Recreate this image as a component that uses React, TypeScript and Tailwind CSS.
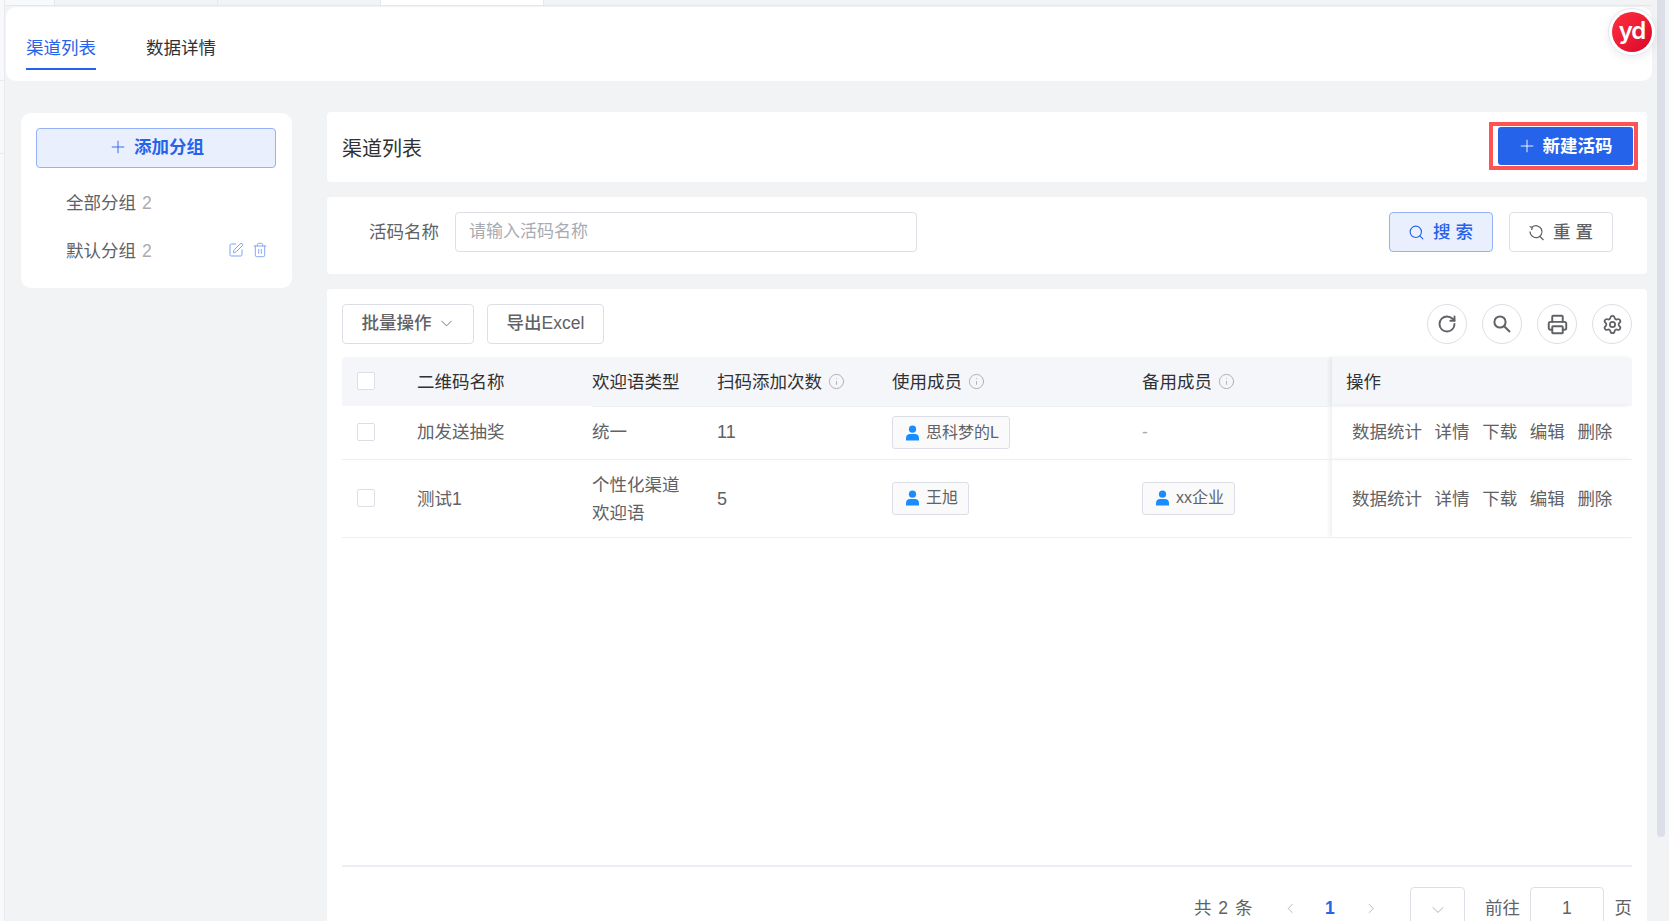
import { ChevronDown, ChevronLeft, ChevronRight, Info, Plus, Printer, RotateCw, Search, Settings, SquarePen, Trash2 } from 'lucide-react';

const OPS = ['数据统计', '详情', '下载', '编辑', '删除'];

function UserIcon() {
  return (
    <svg width="15" height="16" viewBox="0 0 15 16" fill="#1a8cff">
      <circle cx="7.5" cy="4.2" r="3.6" />
      <path d="M1 15.5v-2.6c0-2.4 1.8-4 4-4h5c2.2 0 4 1.6 4 4v2.6z" />
    </svg>
  );
}

function ResetIcon() {
  return (
    <svg width="17" height="17" viewBox="0 0 17 17" fill="none" stroke="#606266" strokeWidth="1.3">
      <path d="M4 3.2A6 6 0 1 1 2 7.6" />
      <path d="M1.5 2.5 L4.2 3.4 L3.6 6" />
      <path d="M11.5 12 L15.5 16" />
    </svg>
  );
}

function MemberTag({ name }: { name: string }) {
  return (
    <span className="inline-flex h-[33px] items-center gap-[6px] rounded-[3px] border border-[#dcdfe6] bg-[#fafafa] pl-[12px] pr-[10px] text-[16px] text-[#606266]">
      <UserIcon />
      {name}
    </span>
  );
}

function HeadCell({ label, tip, line = true }: { label: string; tip?: boolean; line?: boolean }) {
  return (
    <th className={line ? 'border-b border-[#ebeef5] bg-[#f5f6fa] p-0 pt-[1px] text-left text-[17.5px] font-normal text-[#303133]' : 'bg-[#f5f6fa] p-0 pt-[1px] text-left text-[17.5px] font-normal text-[#303133]'}>
      <span className="inline-flex items-center gap-[6px]">
        {label}
        {tip && <Info size={17} strokeWidth={1.3} className="text-[#a8abb2]" />}
      </span>
    </th>
  );
}

function Checkbox() {
  return <span className="ml-[15px] block h-[18px] w-[18px] rounded-[2px] border border-[#dcdfe6] bg-white" />;
}

function OpsCell({ low }: { low?: boolean }) {
  return (
    <td className={low ? 'border-b border-[#ebeef5] p-0 pl-[20px] pt-[2px] shadow-[-3px_0_4px_rgba(0,0,0,0.06)]' : 'border-b border-[#ebeef5] p-0 pl-[20px] shadow-[-3px_0_4px_rgba(0,0,0,0.06)]'}>
      <div className="flex gap-[12.6px] text-[17.5px] text-[#606266]">
        {OPS.map((op) => (
          <span key={op}>{op}</span>
        ))}
      </div>
    </td>
  );
}

function CircleButton({ children }: { children: React.ReactNode }) {
  return (
    <button className="flex h-[40px] w-[40px] items-center justify-center rounded-full border border-[#dcdfe6] bg-white text-[#606266]">
      {children}
    </button>
  );
}

function QrTable() {
  return (
    <table className="w-[1290px] table-fixed border-collapse">
      <colgroup>
        <col className="w-[75px]" />
        <col className="w-[175px]" />
        <col className="w-[125px]" />
        <col className="w-[175px]" />
        <col className="w-[250px]" />
        <col className="w-[190px]" />
        <col className="w-[300px]" />
      </colgroup>
      <thead>
        <tr className="h-[49px]">
          <th className="rounded-tl-[4px] bg-[#f5f6fa] p-0 pb-[2px] text-left">
            <Checkbox />
          </th>
          <HeadCell label="二维码名称" line={false} />
          <HeadCell label="欢迎语类型" />
          <HeadCell label="扫码添加次数" tip />
          <HeadCell label="使用成员" tip />
          <HeadCell label="备用成员" tip />
          <th className="rounded-tr-[4px] bg-[#f5f6fa] p-0 pl-[14px] pt-[1px] text-left text-[17.5px] font-normal text-[#303133] shadow-[-3px_0_4px_rgba(0,0,0,0.06)]">
            操作
          </th>
        </tr>
      </thead>
      <tbody className="text-[17.5px] text-[#606266]">
        <tr className="h-[53px]">
          <td className="border-b border-[#ebeef5] p-0"><Checkbox /></td>
          <td className="border-b border-[#ebeef5] p-0">加发送抽奖</td>
          <td className="border-b border-[#ebeef5] p-0">统一</td>
          <td className="border-b border-[#ebeef5] p-0 text-[18px]">11</td>
          <td className="border-b border-[#ebeef5] p-0"><MemberTag name="思科梦的L" /></td>
          <td className="border-b border-[#ebeef5] p-0 text-[#a8abb2]">-</td>
          <OpsCell />
        </tr>
        <tr className="h-[78px]">
          <td className="border-b border-[#ebeef5] p-0"><Checkbox /></td>
          <td className="border-b border-[#ebeef5] p-0 pt-[2px]">测试1</td>
          <td className="border-b border-[#ebeef5] p-0 pt-[2px] leading-[28px]">个性化渠道<br />欢迎语</td>
          <td className="border-b border-[#ebeef5] p-0 pt-[2px] text-[18px]">5</td>
          <td className="border-b border-[#ebeef5] p-0"><MemberTag name="王旭" /></td>
          <td className="border-b border-[#ebeef5] p-0"><MemberTag name="xx企业" /></td>
          <OpsCell low />
        </tr>
      </tbody>
    </table>
  );
}

function Sidebar() {
  return (
    <aside className="mt-[1px] h-[175px] w-[271px] shrink-0 rounded-[10px] bg-white px-[15px] pt-[15px]">
      <button className="flex h-[40px] w-[240px] items-center justify-center gap-[6px] rounded-[4px] border border-[#94b2f5] bg-[#e9effd] pb-[2px] text-[17.5px] font-bold text-[#2563eb]">
        <Plus size={20} strokeWidth={1.1} />
        添加分组
      </button>
      <div className="mt-[12px] flex h-[47px] items-center pl-[30px] text-[17.5px] text-[#606266]">
        全部分组<span className="ml-[6px] text-[#a8abb2]">2</span>
      </div>
      <div className="flex h-[47px] items-center pl-[30px] pt-[2px] text-[17.5px] text-[#606266]">
        默认分组<span className="ml-[6px] text-[#a8abb2]">2</span>
        <span className="ml-auto mb-[3px] mr-[9px] flex items-center gap-[8px] text-[#7ea3f4]">
          <SquarePen size={16} strokeWidth={1.5} />
          <Trash2 size={16} strokeWidth={1.4} />
        </span>
      </div>
    </aside>
  );
}

export default function App() {
  return (
    <div className="relative flex h-[921px] w-[1669px] overflow-hidden bg-[#f2f3f5] font-['Liberation_Sans','Noto_Sans_CJK_SC',sans-serif]">
      {/* left rail of the host page */}
      <div className="flex w-[5px] shrink-0 flex-col border-r border-[#e8eaef] bg-[#f8f9fb]">
        <div className="h-[81px] border-b border-[#e8eaef]" />
        <div className="h-[73px] border-b border-[#e8eaef]" />
      </div>

      <div className="flex min-w-0 flex-1 flex-col">
        {/* host tab strip */}
        <div className="flex h-[6px] shrink-0 border-b border-[#e4e7ed] bg-[#f2f3f5]">
          <div className="w-[50px] border-r border-[#e4e7ed] bg-[#f8f9fb]" />
          <div className="w-[163px] border-r border-[#e4e7ed]" />
          <div className="w-[163px] border-r border-[#e4e7ed]" />
          <div className="w-[163px] border-r border-[#e4e7ed] bg-white" />
        </div>

        <div className="ml-[1px] mt-[1px] flex h-[74px] shrink-0 items-start gap-[50px] rounded-[10px] bg-white pl-[20px] pt-[29px] text-[17.5px]">
          <div className="flex h-[34px] flex-col border-b-[2px] border-[#2563eb] leading-[24px] text-[#2563eb]">渠道列表</div>
          <div className="leading-[24px] text-[#303133]">数据详情</div>
        </div>

        <div className="flex min-h-0 flex-1 gap-[35px] pl-[16px] pr-[5px] pt-[31px]">
          <Sidebar />

          <main className="flex min-w-0 flex-1 flex-col gap-[15px]">
            <section className="flex h-[70px] shrink-0 items-center justify-between rounded-[4px] bg-white pl-[15px] pr-[9px]">
              <h1 className="mt-[3px] text-[20px] font-normal text-[#303133]">渠道列表</h1>
              <div className="mb-[3px] flex h-[48px] w-[149px] items-center border-[4px] border-[#ff5252] pl-[5px]">
                <button className="flex h-[38px] w-[135px] items-center justify-center gap-[6px] rounded-[3px] bg-[#2563eb] pr-[2px] pt-[1px] text-[17.5px] font-bold text-white">
                  <Plus size={20} strokeWidth={1.1} />
                  新建活码
                </button>
              </div>
            </section>

            <section className="flex h-[77px] shrink-0 items-center rounded-[4px] bg-white pb-[7px] pl-[42px] pr-[34px]">
              <label className="text-[17.5px] text-[#606266]">活码名称</label>
              <input
                placeholder="请输入活码名称"
                className="ml-[16px] h-[40px] w-[462px] rounded-[4px] border border-[#dcdfe6] px-[13px] text-[17px] placeholder:text-[#a8abb2]"
              />
              <button className="ml-auto flex h-[40px] w-[104px] items-center justify-center gap-[8px] rounded-[4px] border border-[#94b2f5] bg-[#e9effd] pl-[4px] text-[17.5px] font-medium tracking-[5px] text-[#2563eb]">
                <Search size={17} strokeWidth={1.6} />
                搜索
              </button>
              <button className="ml-[16px] flex h-[40px] w-[104px] items-center justify-center gap-[8px] rounded-[4px] border border-[#dcdfe6] bg-white pl-[4px] text-[17.5px] font-medium tracking-[5px] text-[#606266]">
                <ResetIcon />
                重置
              </button>
            </section>

            <section className="flex h-[650px] shrink-0 flex-col rounded-[4px] bg-white px-[15px] pt-[15px]">
              <div className="flex h-[40px] items-center">
                <button className="flex h-[40px] w-[132px] items-center justify-center gap-[5px] rounded-[4px] border border-[#dcdfe6] pl-[1px] pb-[1px] text-[17.5px] font-medium text-[#606266]">
                  批量操作
                  <ChevronDown size={19} strokeWidth={1.1} />
                </button>
                <button className="ml-[13px] h-[40px] w-[117px] rounded-[4px] border border-[#dcdfe6] pb-[1px] text-[17.5px] font-medium text-[#606266]">
                  导出Excel
                </button>
                <div className="ml-auto flex gap-[15px]">
                  <CircleButton><RotateCw size={20} strokeWidth={2.3} /></CircleButton>
                  <CircleButton>
                    <svg width="20" height="20" viewBox="0 0 20 20" fill="none" stroke="currentColor" strokeWidth="2">
                      <circle cx="8" cy="8" r="5.6" />
                      <path d="M12.2 12.2 L18 18" />
                    </svg>
                  </CircleButton>
                  <CircleButton><Printer size={21} strokeWidth={2.2} /></CircleButton>
                  <CircleButton><Settings size={21} strokeWidth={2} /></CircleButton>
                </div>
              </div>

              <div className="mt-[13px] h-[510px] border-b-[2px] border-[#ebeef5]">
                <QrTable />
              </div>

              <div className="mt-[20px] flex items-start whitespace-nowrap text-[17.5px] text-[#606266]">
                <span className="ml-[852px] mt-[8px] tracking-[1px]">共 2 条</span>
                <ChevronLeft size={17} strokeWidth={1.2} className="ml-[29px] mt-[13px] text-[#a8abb2]" />
                <span className="ml-[26px] mt-[8px] font-bold text-[#2563eb]">1</span>
                <ChevronRight size={17} strokeWidth={1.2} className="ml-[28px] mt-[13px] text-[#a8abb2]" />
                <span className="ml-[31px] flex h-[40px] w-[57px] items-center justify-center rounded-[4px] border border-[#dcdfe6]">
                  <ChevronDown size={20} strokeWidth={1.1} className="mt-[6px] text-[#a8abb2]" />
                </span>
                <span className="ml-[20px] mt-[8px]">前往</span>
                <span className="ml-[10px] flex h-[40px] w-[76px] justify-center rounded-[4px] border border-[#dcdfe6] pt-[7px]">1</span>
                <span className="ml-[11px] mt-[8px]">页</span>
              </div>
            </section>
          </main>
        </div>
      </div>

      {/* page scrollbar */}
      <div className="w-[17px] shrink-0 pl-[5px] pr-[4px]">
        <div className="h-[837px] rounded-b-[6px] bg-[#dcdfe8]" />
      </div>

      {/* floating yd badge */}
      <div className="absolute left-[1608px] top-[8px] flex h-[48px] w-[48px] items-center justify-center rounded-full border border-[#e6e8f2] bg-white shadow-[0_2px_8px_rgba(0,0,0,0.08)]">
        <div className="flex h-[40px] w-[40px] items-center justify-center rounded-full bg-gradient-to-br from-[#ff2e3e] to-[#d9002c] pb-[2px] font-['Inter',sans-serif] text-[24px] font-semibold leading-none tracking-[-1px] text-white">
          yd
        </div>
      </div>
    </div>
  );
}
